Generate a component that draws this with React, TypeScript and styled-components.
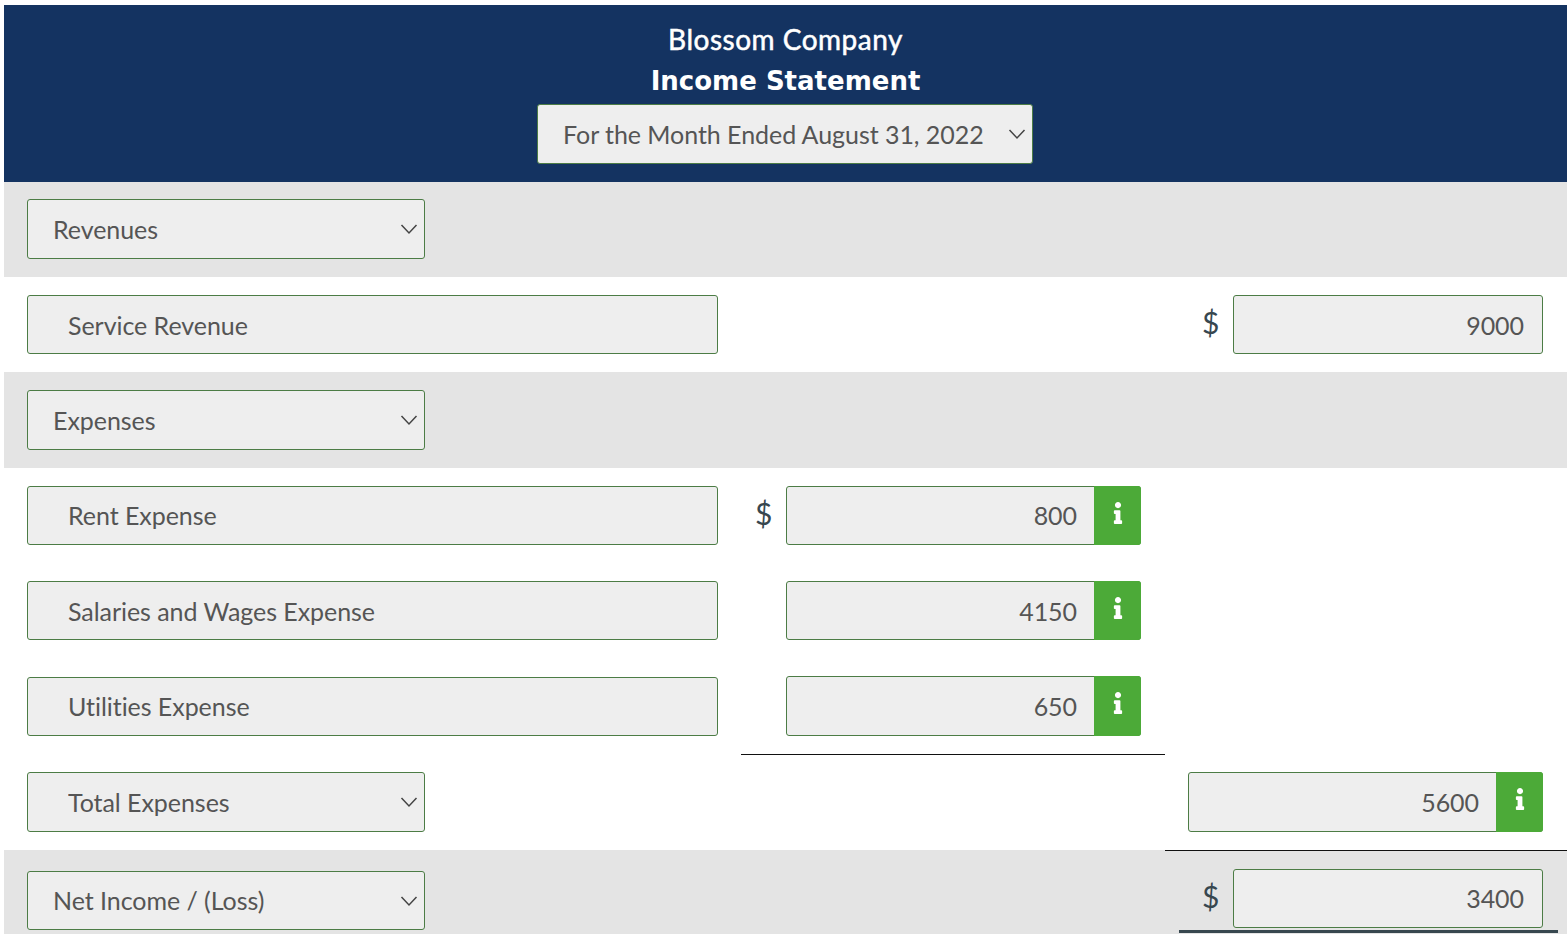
import React from "react";
import styled, { createGlobalStyle } from "styled-components";
import { FaInfo } from "react-icons/fa";

const Global = createGlobalStyle`
  html, body { margin: 0; padding: 0; background: #fff; overflow: hidden; }
  body { font-family: Lato, "Noto Sans", sans-serif; }
`;

const Page = styled.div`
  width: 1563px;
  margin: 5px 0 0 4px;
`;

const Header = styled.header`
  height: 177px;
  background: #143361;
  color: #fff;
  display: flex;
  flex-direction: column;
  align-items: center;
  padding-top: 16px;
  box-sizing: border-box;
`;

const Company = styled.div`
  font-size: 28px;
  line-height: 36px;
  font-weight: 400;
  letter-spacing: 0.5px;
  -webkit-text-stroke: 0.5px #fff;
  text-align: center;
`;

const Title = styled.div`
  font-family: "DejaVu Sans", Lato, sans-serif;
  font-size: 26px;
  line-height: 40px;
  font-weight: 700;
  margin-top: 4px;
`;

const Row = styled.div<{ $h: number; $band?: boolean }>`
  height: ${(p) => p.$h}px;
  background: ${(p) => (p.$band ? "#e4e4e4" : "#fff")};
  display: grid;
  grid-template-columns: 737px 424px 402px;
`;

const Cell = styled.div<{ $top: number; $rule?: boolean; $topRule?: boolean }>`
  padding-top: ${(p) => p.$top}px;
  box-sizing: border-box;
  ${(p) => (p.$rule ? "border-bottom: 1px solid #111;" : "")}
  ${(p) => (p.$topRule ? "border-top: 1px solid #111;" : "")}
`;

const LabelCell = styled(Cell)`
  padding-left: 23px;
`;

const AmountCell = styled(Cell)`
  display: flex;
  justify-content: flex-end;
  align-items: flex-start;
  padding-right: 24px;
`;

const Dollar = styled.span`
  font-size: 30px;
  line-height: 54px;
  color: #37474f;
  width: 15px;
  margin-right: 16px;
  flex: none;
  text-align: center;
`;

const Control = styled.div<{ $w: number; $h: number }>`
  position: relative;
  width: ${(p) => p.$w}px;
  height: ${(p) => p.$h}px;
  flex: none;
`;

const Field = styled.input<{ $align?: "left" | "right"; $pad: number; $lift?: boolean }>`
  display: block;
  width: 100%;
  height: 100%;
  box-sizing: border-box;
  border: 1px solid #4c7c45;
  border-radius: 3px;
  background: #eeeeee;
  color: #555;
  font-family: inherit;
  font-size: 25px;
  letter-spacing: -0.05px;
  text-align: ${(p) => p.$align ?? "left"};
  padding: ${(p) => (p.$lift ? "0 " : "1px ")}
    ${(p) => (p.$align === "right" ? p.$pad : 8)}px
    ${(p) => (p.$lift ? "1px " : "0 ")}
    ${(p) => (p.$align === "right" ? 8 : p.$pad)}px;
  outline: none;
`;

const Picker = styled.select<{ $pad: number; $lift?: boolean }>`
  display: block;
  width: 100%;
  height: 100%;
  box-sizing: border-box;
  appearance: none;
  border: 1px solid #4c7c45;
  border-radius: 3px;
  background: #eeeeee;
  color: #555;
  font-family: inherit;
  font-size: 25px;
  letter-spacing: -0.05px;
  padding: 0 30px ${(p) => (p.$lift ? 2 : 0)}px ${(p) => p.$pad}px;
  outline: none;
`;

const Chevron = styled.svg`
  position: absolute;
  right: 7px;
  top: 50%;
  margin-top: -6px;
  width: 18px;
  height: 12px;
  fill: none;
  stroke: #444;
  stroke-width: 1.5;
  pointer-events: none;
`;

const InfoButton = styled.div`
  position: absolute;
  right: 0;
  top: 0;
  bottom: 0;
  width: 47px;
  background: #4caa38;
  border-radius: 0 3px 3px 0;
  display: flex;
  align-items: center;
  justify-content: center;
  color: #fff;
  font-size: 22px;
  padding-bottom: 6px;
  box-sizing: border-box;
`;

const HeaderPicker = styled(Control)`
  margin-top: 3px;
  margin-left: -1px;
`;

const TotalBox = styled.div`
  display: flex;
  justify-content: flex-end;
  align-items: flex-start;
  width: 379px;
  height: 64px;
  margin-left: 14px;
  padding-right: 15px;
  box-sizing: border-box;
  border-bottom: 3px solid #37474f;
`;

const Select = ({ value, h = 60, pad = 25, lift }: { value: string; h?: number; pad?: number; lift?: boolean }) => (
  <Control $w={398} $h={h}>
    <Picker $pad={pad} $lift={lift} value={value} onChange={() => {}}>
      <option>{value}</option>
    </Picker>
    <Chevron viewBox="0 0 18 12">
      <path d="M1.5 2 L9 10 L16.5 2" />
    </Chevron>
  </Control>
);

const Text = ({ value, lift }: { value: string; lift?: boolean }) => (
  <Control $w={691} $h={59}>
    <Field readOnly value={value} $pad={40} $lift={lift} />
  </Control>
);

const Amount = ({ value, w, h = 59, info, lift }: { value: string; w: number; h?: number; info?: boolean; lift?: boolean }) => (
  <Control $w={w} $h={h}>
    <Field readOnly value={value} $align="right" $pad={info ? 63 : 18} $lift={lift} />
    {info && (
      <InfoButton>
        <FaInfo />
      </InfoButton>
    )}
  </Control>
);

export default function App() {
  return (
    <Page>
      <Global />
      <Header>
        <Company>Blossom Company</Company>
        <Title>Income Statement</Title>
        <HeaderPicker $w={496} $h={60}>
          <Picker $pad={25} value="For the Month Ended August 31, 2022" onChange={() => {}}>
            <option>For the Month Ended August 31, 2022</option>
          </Picker>
          <Chevron viewBox="0 0 18 12">
            <path d="M1.5 2 L9 10 L16.5 2" />
          </Chevron>
        </HeaderPicker>
      </Header>

      <Row $h={95} $band>
        <LabelCell $top={17}><Select value="Revenues" /></LabelCell>
      </Row>

      <Row $h={95}>
        <LabelCell $top={18}><Text value="Service Revenue" /></LabelCell>
        <div />
        <AmountCell $top={18}>
          <Dollar>$</Dollar>
          <Amount value="9000" w={310} />
        </AmountCell>
      </Row>

      <Row $h={96} $band>
        <LabelCell $top={18}><Select value="Expenses" /></LabelCell>
      </Row>

      <Row $h={95}>
        <LabelCell $top={18}><Text value="Rent Expense" lift /></LabelCell>
        <AmountCell $top={18}>
          <Dollar>$</Dollar>
          <Amount value="800" w={355} info lift />
        </AmountCell>
      </Row>

      <Row $h={96}>
        <LabelCell $top={18}><Text value="Salaries and Wages Expense" /></LabelCell>
        <AmountCell $top={18}>
          <Amount value="4150" w={355} info />
        </AmountCell>
      </Row>

      <Row $h={96}>
        <LabelCell $top={18}><Text value="Utilities Expense" lift /></LabelCell>
        <AmountCell $top={17} $rule>
          <Amount value="650" w={355} h={60} info lift />
        </AmountCell>
      </Row>

      <Row $h={95}>
        <LabelCell $top={17}><Select value="Total Expenses" pad={40} /></LabelCell>
        <div />
        <AmountCell $top={17}>
          <Amount value="5600" w={355} h={60} info lift />
        </AmountCell>
      </Row>

      <Row $h={84} $band>
        <LabelCell $top={21}><Select value="Net Income / (Loss)" h={59} lift /></LabelCell>
        <div />
        <Cell $top={18} $topRule>
          <TotalBox>
            <Dollar>$</Dollar>
            <Amount value="3400" w={310} lift />
          </TotalBox>
        </Cell>
      </Row>
    </Page>
  );
}
